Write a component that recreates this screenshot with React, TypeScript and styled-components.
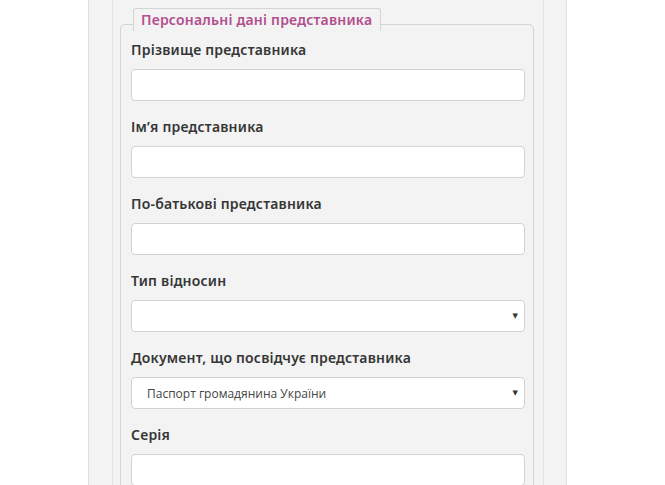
import React from 'react';
import styled, { createGlobalStyle } from 'styled-components';

const GlobalStyle = createGlobalStyle`
  html, body {
    margin: 0;
    padding: 0;
    background: #ffffff;
  }
  * {
    box-sizing: border-box;
  }
`;

interface Field {
  label: string;
  kind: 'input' | 'select';
  value?: string;
}

const fields: Field[] = [
  { label: 'Прізвище представника', kind: 'input' },
  { label: 'Ім’я представника', kind: 'input' },
  { label: 'По-батькові представника', kind: 'input' },
  { label: 'Тип відносин', kind: 'select' },
  { label: 'Документ, що посвідчує представника', kind: 'select', value: 'Паспорт громадянина України' },
  { label: 'Серія', kind: 'input' },
];

const App = () => {
  return (
    <>
      <GlobalStyle />
      <Page>
        <Panel>
          <Inner>
            <Tab>Персональні дані представника</Tab>
            <Fieldset>
              {fields.map((field) => (
                <Group key={field.label}>
                  <Label>{field.label}</Label>
                  {field.kind === 'input' ? (
                    <Input type='text' />
                  ) : (
                    <SelectBox>
                      <SelectValue>{field.value}</SelectValue>
                      <Arrow>▼</Arrow>
                    </SelectBox>
                  )}
                </Group>
              ))}
            </Fieldset>
          </Inner>
        </Panel>
      </Page>
    </>
  );
};

const Page = styled.div`
  width: 665px;
  height: 485px;
  overflow: hidden;
  background: #ffffff;
`;

const Panel = styled.div`
  margin-left: 88px;
  width: 479px;
  height: 600px;
  background: #f3f3f3;
  border-left: 1px solid #dedede;
  border-right: 1px solid #dedede;
  padding-left: 23px;
  padding-right: 22px;
`;

const Inner = styled.div`
  height: 100%;
  border-left: 1px solid #e2e2e2;
  border-right: 1px solid #e2e2e2;
  padding: 8px 8px 0 7px;
`;

const Tab = styled.div`
  position: relative;
  z-index: 1;
  width: fit-content;
  margin-left: 13px;
  margin-bottom: -7px;
  height: 23px;
  padding: 2px 8px 0 7px;
  background: #f3f3f3;
  border: 1px solid #d4d4d4;
  border-bottom: none;
  border-radius: 3px 3px 0 0;
  font-family: 'Noto Sans', sans-serif;
  font-weight: 600;
  font-size: 14px;
  letter-spacing: 0.2px;
  line-height: 18px;
  color: #b24f8d;
`;

const Fieldset = styled.div`
  width: 414px;
  border: 1px solid #d4d4d4;
  border-radius: 5px;
  padding: 15px 8px 0 10px;
  background: #f3f3f3;
`;

const Group = styled.div`
  margin-bottom: 16px;
`;

const Label = styled.div`
  font-family: 'Noto Sans', sans-serif;
  font-weight: 600;
  font-size: 14px;
  letter-spacing: 0.2px;
  line-height: 20px;
  color: #363636;
  margin-bottom: 9px;
`;

const Input = styled.input`
  display: block;
  width: 100%;
  height: 32px;
  border: 1px solid #d2d2d2;
  border-radius: 4px;
  background: #ffffff;
  outline: none;
`;

const SelectBox = styled.div`
  display: flex;
  align-items: center;
  justify-content: space-between;
  width: 100%;
  height: 32px;
  border: 1px solid #d2d2d2;
  border-radius: 4px;
  background: #ffffff;
  padding: 0 6px 0 15px;
`;

const SelectValue = styled.span`
  font-family: 'Open Sans', sans-serif;
  font-size: 12px;
  color: #444444;
`;

const Arrow = styled.span`
  font-family: 'DejaVu Sans', sans-serif;
  font-size: 7px;
  color: #333333;
`;

export default App;
